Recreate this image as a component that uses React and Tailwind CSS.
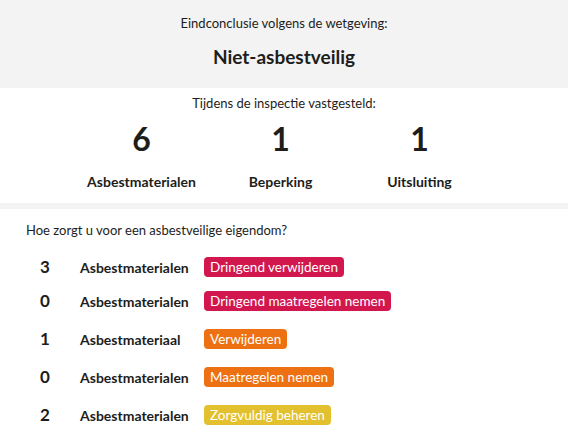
import React from 'react';

const stats = [
  { value: 6, label: 'Asbestmaterialen' },
  { value: 1, label: 'Beperking' },
  { value: 1, label: 'Uitsluiting' },
];

const rows = [
  { count: 3, label: 'Asbestmaterialen', action: 'Dringend verwijderen', color: 'bg-[#d2174f]', mt: 'mt-0' },
  { count: 0, label: 'Asbestmaterialen', action: 'Dringend maatregelen nemen', color: 'bg-[#d2174f]', mt: 'mt-[14px]' },
  { count: 1, label: 'Asbestmateriaal', action: 'Verwijderen', color: 'bg-[#ed7012]', mt: 'mt-[18px]' },
  { count: 0, label: 'Asbestmaterialen', action: 'Maatregelen nemen', color: 'bg-[#ed7012]', mt: 'mt-[18px]' },
  { count: 2, label: 'Asbestmaterialen', action: 'Zorgvuldig beheren', color: 'bg-[#e3c12e]', mt: 'mt-[18px]' },
];

export default function App() {
  return (
    <div className="w-[568px] h-[436px] bg-white text-[#1d1d1b] font-['Lato',sans-serif] overflow-hidden">
      {/* Conclusion */}
      <div className="bg-[#f3f3f3] pt-[13px] pb-[17px] text-center">
        <p className="text-[13px] leading-[20px]">Eindconclusie volgens de wetgeving:</p>
        <h1 className="mt-[10px] text-[19px] leading-[28px] font-bold">Niet-asbestveilig</h1>
      </div>

      {/* Inspection */}
      <div className="pt-[5px] pb-[11px]">
        <p className="text-center text-[13px] leading-[20px]">Tijdens de inspectie vastgesteld:</p>
        <div className="flex pl-[72px] mt-[6px]">
          {stats.map((s, i) => (
            <div key={i} className="w-[139px] flex flex-col items-center">
              <span className="text-[32px] leading-[40px] font-bold">{s.value}</span>
              <span className="mt-[13px] text-[14px] leading-[20px] font-bold">{s.label}</span>
            </div>
          ))}
        </div>
      </div>
      <div className="h-[6px] bg-[#f3f3f3]"></div>

      {/* Actions */}
      <div className="pt-[11px] pl-[26px]">
        <p className="text-[13px] leading-[20px]">Hoe zorgt u voor een asbestveilige eigendom?</p>
        <div className="mt-[17px]">
          {rows.map((r, i) => (
            <div key={i} className={`flex items-center h-[20px] ${r.mt}`}>
              <span className="w-[38px] text-center text-[17px] font-bold">{r.count}</span>
              <span className="ml-[16px] w-[124px] text-[14px] font-bold">{r.label}</span>
              <span className={`h-[20px] px-[6px] rounded-[4px] text-white text-[13.5px] leading-[20px] ${r.color}`}>
                {r.action}
              </span>
            </div>
          ))}
        </div>
      </div>
    </div>
  );
}
